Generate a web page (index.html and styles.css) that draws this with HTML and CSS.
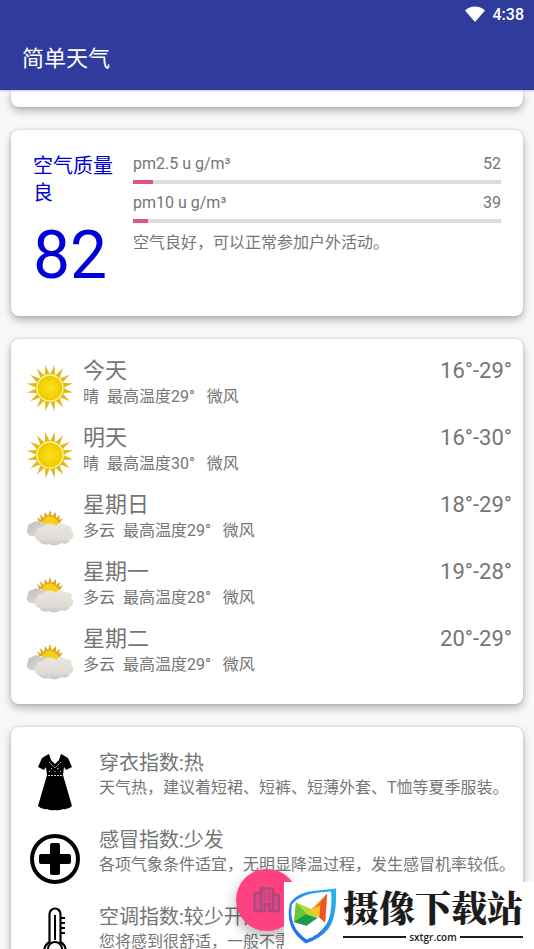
FILE: index.html
```html
<!DOCTYPE html>
<html lang="zh-CN">
<head>
  <meta charset="UTF-8" />
  <meta name="viewport" content="width=device-width, initial-scale=1" />
  <title>简单天气</title>
  <link rel="stylesheet" href="styles.css">
</head>
<body>

<!-- shared drawings -->
<svg class="defs" width="0" height="0" aria-hidden="true">
  <defs>
    <radialGradient id="sun-fill">
      <stop offset="0" stop-color="#fbe01c" />
      <stop offset="0.75" stop-color="#f2d000" />
      <stop offset="1" stop-color="#e8c400" />
    </radialGradient>
    <linearGradient id="cloud-fill" x1="0" y1="0" x2="0" y2="1">
      <stop offset="0" stop-color="#eae7e1" />
      <stop offset="0.7" stop-color="#dfdcd7" />
      <stop offset="1" stop-color="#c9c7c4" />
    </linearGradient>
    <linearGradient id="cloud-back" x1="0" y1="0" x2="1" y2="1">
      <stop offset="0" stop-color="#bdbdbd" />
      <stop offset="1" stop-color="#e2e2e2" />
    </linearGradient>
    <symbol id="ray" viewBox="0 0 48 48">
      <path d="M21.500 11 L24 0.300 L26.500 11 Z" fill="#dfb91a" />
    </symbol>
    <symbol id="sunny" viewBox="0 0 48 48">
      <g id="rays4">
        <use href="#ray" transform="rotate(11 24 24)" />
        <use href="#ray" transform="rotate(33.500 24 24)" />
        <use href="#ray" transform="rotate(56 24 24)" />
        <use href="#ray" transform="rotate(78.500 24 24)" />
      </g>
      <use href="#rays4" transform="rotate(90 24 24)" />
      <use href="#rays4" transform="rotate(180 24 24)" />
      <use href="#rays4" transform="rotate(270 24 24)" />
      <circle cx="24" cy="24" r="14.500" fill="#e3be0c" />
      <circle cx="24" cy="24" r="13" fill="url(#sun-fill)" stroke="#fdf3a0" stroke-width="1.400" />
    </symbol>
    <symbol id="cloudy" viewBox="0 0 48 48">
      <path d="M13 24l-2-5 4 3-1-6 4 4 1-6 3 4 2-6 2 6 4-4 0 6 4-3-1 5 4-2-3 5z" fill="#e0a81c" />
      <circle cx="24" cy="27" r="8.500" fill="#f7cf1d" />
      <path d="M5 38a5 5 0 0 1-3-8a4 4 0 0 1 4-5a6 5 0 0 1 9 0a5 5 0 0 1 7 5l-5 9z" fill="url(#cloud-back)" />
      <path d="M13 43a5 5 0 0 1-3-8a6 6 0 0 1 7-6a8 7 0 0 1 13-1a6 5 0 0 1 10-1a5 4 0 0 1 5 6a5 5 0 0 1-1 9a6 5 0 0 1-9 3a8 5 0 0 1-12 1a7 5 0 0 1-10-3z" fill="url(#cloud-fill)" />
    </symbol>
  </defs>
</svg>

<header class="app-bar">
  <div class="status-bar">
    <svg class="wifi" viewBox="0 0 20 16" aria-hidden="true"><path d="M0 4.500C5.500-1 14.500-1 20 4.500L10 16z" fill="#fff" /></svg>
    <span>4:38</span>
  </div>
  <h1>简单天气</h1>
</header>

<main class="feed">
  <section class="card card-end"></section>

  <section class="card air">
    <div class="air-summary">
      <p class="air-level">空气质量良</p>
      <p class="air-value">82</p>
    </div>
    <div class="air-detail">
      <div class="meter-label"><span>pm2.5 u g/m³</span><span>52</span></div>
      <div class="meter"><div class="meter-fill" style="width: 5.4%"></div></div>
      <div class="meter-label"><span>pm10 u g/m³</span><span>39</span></div>
      <div class="meter"><div class="meter-fill" style="width: 4%"></div></div>
      <p>空气良好，可以正常参加户外活动。</p>
    </div>
  </section>

  <section class="card forecast">
    <div class="day">
      <svg class="day-icon" aria-hidden="true"><use href="#sunny" /></svg>
      <div class="day-text"><h2>今天</h2><p>晴  最高温度29°   微风</p></div>
      <span class="range">16°-29°</span>
    </div>
    <div class="day">
      <svg class="day-icon" aria-hidden="true"><use href="#sunny" /></svg>
      <div class="day-text"><h2>明天</h2><p>晴  最高温度30°   微风</p></div>
      <span class="range">16°-30°</span>
    </div>
    <div class="day">
      <svg class="day-icon" aria-hidden="true"><use href="#cloudy" /></svg>
      <div class="day-text"><h2>星期日</h2><p>多云  最高温度29°   微风</p></div>
      <span class="range">18°-29°</span>
    </div>
    <div class="day">
      <svg class="day-icon" aria-hidden="true"><use href="#cloudy" /></svg>
      <div class="day-text"><h2>星期一</h2><p>多云  最高温度28°   微风</p></div>
      <span class="range">19°-28°</span>
    </div>
    <div class="day">
      <svg class="day-icon" aria-hidden="true"><use href="#cloudy" /></svg>
      <div class="day-text"><h2>星期二</h2><p>多云  最高温度29°   微风</p></div>
      <span class="range">20°-29°</span>
    </div>
  </section>

  <section class="card indices">
    <div class="index">
      <svg class="index-icon" viewBox="0 0 52 60" aria-hidden="true">
        <path d="M18 3l2-1 2 6 4 4 4-4 2-6 2 1 5 3 4 9-6 3-2-3-1 8 9 31q-4 4-9 3-4 2-8 1-4 1-8-1-5 1-9-3l9-31-1-8-2 3-6-3 4-9z" />
        <path d="M19 23.500h14M20 10l6 6 6-6M22 16l1 1M28 17l2-1M20 19l1 1M26 19v1M31 20l1-1" fill="none" stroke="#fff" stroke-width="0.800" stroke-dasharray="2 1" />
      </svg>
      <div class="index-text"><h2>穿衣指数:热</h2><p>天气热，建议着短裙、短裤、短薄外套、T恤等夏季服装。</p></div>
    </div>
    <div class="index">
      <svg class="index-icon" viewBox="0 0 52 60" aria-hidden="true">
        <circle cx="26" cy="30" r="23" fill="none" stroke="#000" stroke-width="4" />
        <path d="M23 14h6q2 0 2 2v9h9q2 0 2 2v6q0 2-2 2h-9v9q0 2-2 2h-6q-2 0-2-2v-9h-9q-2 0-2-2v-6q0-2 2-2h9v-9q0-2 2-2z" />
      </svg>
      <div class="index-text"><h2>感冒指数:少发</h2><p>各项气象条件适宜，无明显降温过程，发生感冒机率较低。</p></div>
    </div>
    <div class="index">
      <svg class="index-icon" viewBox="0 0 52 60" aria-hidden="true">
        <path d="M20.500 36V8a5.500 5.500 0 0 1 11 0v28a11 11 0 1 1-11 0z" fill="none" stroke="#000" stroke-width="2.200" />
        <path d="M26 9v25M31 12h5M31 17h5M31 22h5M31 27h5" fill="none" stroke="#000" stroke-width="2" />
        <circle cx="26" cy="43" r="7" fill="none" stroke="#000" stroke-width="2" />
      </svg>
      <div class="index-text"><h2>空调指数:较少开启</h2><p>您将感到很舒适，一般不需要开启空调。</p></div>
    </div>
  </section>
</main>

<button class="fab" type="button" aria-label="城市">
  <svg viewBox="0 0 28 28" aria-hidden="true">
    <path d="M1.500 7H8v18H1.500zM8 2.500h12V25h-4v-7h-4v7H8zM20 9h6v16h-6z" fill="#e04484" stroke="#a94a7c" stroke-width="2.400" stroke-linejoin="round" />
    <path d="M11.500 6v9M16.500 6v9" stroke="#b94a80" stroke-width="1.500" />
  </svg>
</button>

<aside class="site-mark">
  <svg class="site-logo" viewBox="0 0 50 58" aria-hidden="true">
    <defs>
      <linearGradient id="shield" x1="1" y1="0" x2="0" y2="1">
        <stop offset="0" stop-color="#2bb5f2" />
        <stop offset="1" stop-color="#1d62ee" />
      </linearGradient>
    </defs>
    <path d="M2 16Q10 4 30 3L49 1Q50 29 42 41Q34 52 18 57Q6 48 3 39Q-1 29 2 16z" fill="url(#shield)" />
    <path d="M4 17Q12 7 31 5L44 4Q46 28 38 39Q31 49 19 53Q9 46 6 38Q2 29 4 17z" fill="#fff" />
    <path d="M8 15L24 28 19 39 6 35z" fill="#69c63c" />
    <path d="M6 35L19 27 30 31 19 39z" fill="#199b49" />
    <path d="M8 15L26 23 31 31 20 28z" fill="#b5db37" />
    <path d="M22 24L40 6 33 27z" fill="#f6a62b" />
    <path d="M40 6L38 36 25 25z" fill="#ec5525" />
    <path d="M22 24L33 18 32 31z" fill="#f8c331" />
  </svg>
  <div class="site-name">
    <strong>摄像下载站</strong>
    <span class="site-url">sxtgr.com</span>
  </div>
</aside>

</body>
</html>
```

FILE: styles.css
```css
* {
  box-sizing: border-box;
}
body {
  margin: 0;
  height: 100vh;
  overflow: hidden;
  position: relative;
  display: flex;
  flex-direction: column;
  font-family: Roboto, "Noto Sans CJK SC", sans-serif;
  font-size: 16px;
  line-height: 24px;
  background: #f8f8f8;
  color: #757575;
}
h1, h2, p {
  margin: 0;
  font-weight: 400;
}
.defs {
  position: absolute;
}

/* app bar */
.app-bar {
  flex: none;
  background: #2f3c9e;
  color: #fff;
  padding-bottom: 16px;
  z-index: 1;
  box-shadow: 0 1px 2px rgba(48, 63, 159, 0.3);
}
.status-bar {
  display: flex;
  justify-content: flex-end;
  align-items: center;
  gap: 8px;
  padding: 3px 10px 0 0;
  height: 27px;
  font-weight: 500;
}
.wifi {
  width: 20px;
  height: 16px;
  margin-bottom: 3px;
}
.app-bar h1 {
  padding: 16px 22px 0;
  font-size: 22px;
  line-height: 31px;
}

/* cards */
.feed {
  flex: 1;
  min-height: 0;
  overflow: hidden;
  padding: 0 11px;
}
.card {
  background: #fff;
  border-radius: 8px;
  margin-bottom: 23px;
  box-shadow: 0 4px 9px rgba(0, 0, 0, 0.28), 0 0 3px rgba(0, 0, 0, 0.14);
}
.card-end {
  height: 17px;
  border-radius: 0 0 8px 8px;
}

.air {
  display: flex;
  gap: 20px;
  padding: 23px 22px 22px;
}
.air-summary {
  width: 80px;
  flex: none;
  color: #0000d6;
}
.air-level {
  font-size: 20px;
  line-height: 27px;
}
.air-value {
  padding-top: 10px;
  font-size: 66px;
  line-height: 77px;
}
.air-detail {
  flex: 1;
}
.meter-label {
  display: flex;
  justify-content: space-between;
  line-height: 22px;
}
.meter {
  height: 4px;
  margin: 5px 0 8px;
  background: #dcdcdc;
}
.meter-fill {
  height: 100%;
  background: #e0528c;
}

.forecast {
  padding: 17px 11px 13px 15px;
}
.day {
  display: flex;
  gap: 9px;
  height: 67px;
}
.day-icon {
  width: 48px;
  height: 48px;
  margin-top: 8px;
}
.day-text {
  flex: 1;
}
.day h2 {
  font-size: 22px;
  line-height: 30px;
}
.day p {
  line-height: 22px;
  white-space: pre-wrap;
}
.range {
  font-size: 22px;
  line-height: 30px;
}

.indices {
  padding: 23px 11px;
}
.index {
  display: flex;
  gap: 18px;
  height: 77px;
}
.index-icon {
  width: 52px;
  height: 60px;
  margin: 2px 0 0 7px;
  flex: none;
}
.index-text {
  white-space: nowrap;
}
.index h2 {
  font-size: 20px;
  line-height: 27px;
}
.index p {
  line-height: 22px;
}

/* floating parts */
.fab {
  position: absolute;
  left: 50%;
  bottom: 18px;
  width: 62px;
  height: 62px;
  margin-left: -31px;
  padding: 0;
  display: grid;
  place-items: center;
  border: 0;
  border-radius: 50%;
  background: #ff4081;
  box-shadow: 0 6px 14px rgba(0, 0, 0, 0.3);
}
.fab svg {
  width: 28px;
  height: 28px;
}
.site-mark {
  position: absolute;
  right: 0;
  bottom: 0;
  display: flex;
  gap: 6px;
  width: 250px;
  height: 67px;
  padding: 5px 11px 0 4px;
  background: #fff;
  color: #1c1c1c;
}
.site-logo {
  width: 50px;
  height: 58px;
}
.site-name {
  flex: 1;
}
.site-name strong {
  display: block;
  font-family: "Noto Serif CJK SC", "Noto Sans CJK SC", serif;
  font-size: 36px;
  line-height: 40px;
  font-weight: 900;
  white-space: nowrap;
}
.site-url {
  display: flex;
  align-items: center;
  gap: 3px;
  font-family: "Open Sans", sans-serif;
  font-size: 10px;
  line-height: 20px;
  font-weight: 600;
}
.site-url::before,
.site-url::after {
  content: "";
  flex: 1;
  height: 2px;
  background: #1c1c1c;
}
```
